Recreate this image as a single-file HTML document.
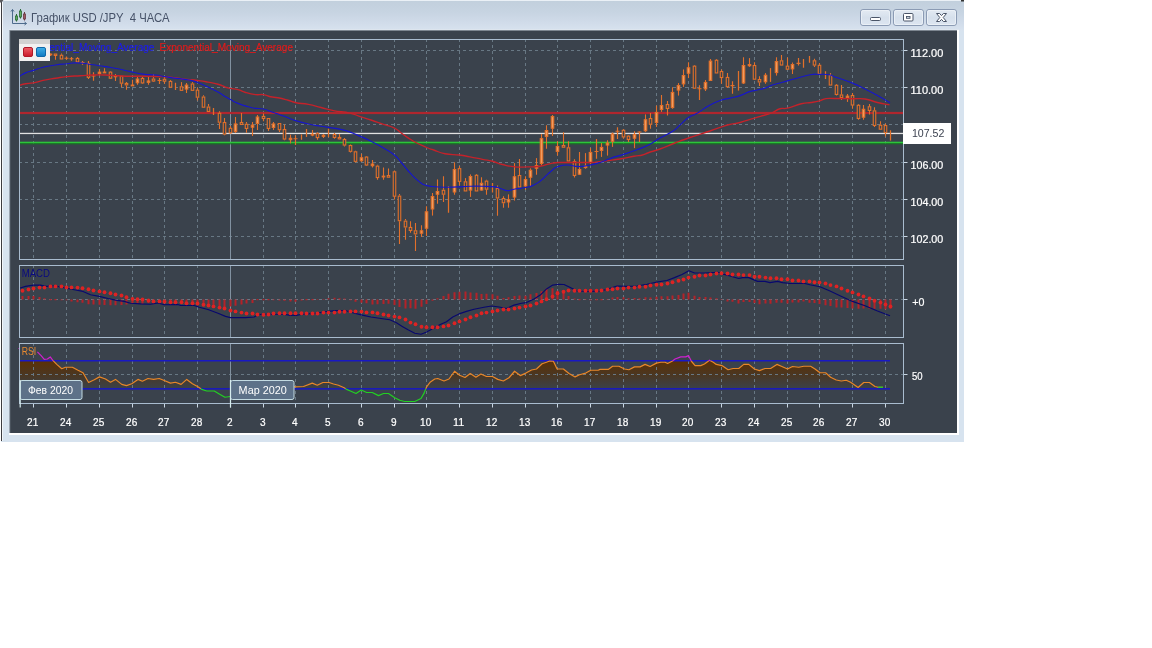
<!DOCTYPE html>
<html lang="ru"><head><meta charset="utf-8"><title>График USD /JPY 4 ЧАСА</title>
<style>html,body{margin:0;padding:0;background:#fff;}body{width:1152px;height:648px;overflow:hidden;}svg{display:block;}text{font-family:"Liberation Sans",sans-serif;}svg{will-change:transform;}</style></head><body>
<svg width="1152" height="648" viewBox="0 0 1152 648">
<defs>
<linearGradient id="tb" x1="0" y1="0" x2="0" y2="1"><stop offset="0" stop-color="#c1cfdc"/><stop offset="0.4" stop-color="#c7d4e2"/><stop offset="0.75" stop-color="#d1dcea"/><stop offset="1" stop-color="#d8e3ef"/></linearGradient>
<linearGradient id="btn" x1="0" y1="0" x2="0" y2="1"><stop offset="0" stop-color="#e4ebf3"/><stop offset="0.5" stop-color="#d6e0ec"/><stop offset="1" stop-color="#dde6f1"/></linearGradient>
<linearGradient id="rsif" gradientUnits="userSpaceOnUse" x1="0" y1="360" x2="0" y2="390"><stop offset="0" stop-color="#5e3002" stop-opacity="1"/><stop offset="0.5" stop-color="#553008" stop-opacity="0.62"/><stop offset="1" stop-color="#4a3418" stop-opacity="0.03"/></linearGradient>
<linearGradient id="rb" x1="0" y1="0" x2="0" y2="1"><stop offset="0" stop-color="#f06068"/><stop offset="1" stop-color="#c81828"/></linearGradient>
<linearGradient id="bb" x1="0" y1="0" x2="0" y2="1"><stop offset="0" stop-color="#40b0e8"/><stop offset="1" stop-color="#1078c0"/></linearGradient>
<clipPath id="cm"><rect x="20" y="40" width="883" height="219"/></clipPath>
<clipPath id="cr"><rect x="20" y="361" width="883" height="28"/></clipPath>
</defs>
<rect x="0" y="0" width="1152" height="648" fill="#ffffff"/>
<rect x="0" y="0" width="964" height="442" fill="#d7e3ef"/>
<rect x="0" y="0" width="964" height="31" fill="url(#tb)"/>
<rect x="0" y="0" width="964" height="1" fill="#eaf0f6"/>
<rect x="0" y="0" width="1" height="442" fill="#ffffff"/>
<rect x="1" y="1" width="1" height="440" fill="#3c3c40"/>
<rect x="2" y="2" width="1" height="439" fill="#f2f6fa"/>
<path d="M0,0 L3.5,0 L1.5,2.5 L0,2.5 Z" fill="#5a5a5e"/>
<rect x="961" y="0" width="3" height="1.5" fill="#333"/>
<rect x="9" y="29" width="950" height="406" fill="#ffffff"/>
<rect x="9" y="29" width="948" height="404" fill="#3a424c"/>
<rect x="9" y="29" width="950" height="1" fill="#dde5ee"/>
<rect x="9" y="30" width="948" height="1" fill="#7d8690"/>
<rect x="9" y="30" width="1" height="403" fill="#9aa4b0"/>
<rect x="10" y="31" width="1" height="402" fill="#4a535d"/>
<g stroke="#4d6b8c" stroke-width="1" fill="none"><path d="M12.5,9.5 V23.5 H26.5"/><path d="M11,11.5 L12.5,9.5 L14,11.5"/><path d="M24.5,22 L26.5,23.5 L24.5,25"/></g>
<g stroke-width="1"><path d="M16.5,14 V21.5" stroke="#2e6a3a"/><rect x="15.5" y="16" width="2" height="4" fill="#5fae5f" stroke="#2a6a34" stroke-width="0.8"/><path d="M20.5,9 V18.5" stroke="#2e6a3a"/><rect x="19.5" y="11" width="2" height="6" fill="#5fae5f" stroke="#2a6a34" stroke-width="0.8"/><path d="M24.5,12 V20.5" stroke="#6a3a44"/><rect x="23.5" y="14" width="2" height="5" fill="#a05a64" stroke="#6a3a44" stroke-width="0.8"/></g>
<text x="31" y="21.7" font-size="12.2" fill="#465268" textLength="138.5" lengthAdjust="spacingAndGlyphs">График USD /JPY&#160;&#160;4 ЧАСА</text>
<rect x="860.5" y="9.5" width="30" height="16" rx="2.5" fill="url(#btn)" stroke="#8b9bb4" stroke-width="1"/>
<rect x="861.5" y="10.5" width="28" height="14" rx="1.8" fill="none" stroke="#eef3f8" stroke-width="1" opacity="0.8"/>
<rect x="893.5" y="9.5" width="30" height="16" rx="2.5" fill="url(#btn)" stroke="#8b9bb4" stroke-width="1"/>
<rect x="894.5" y="10.5" width="28" height="14" rx="1.8" fill="none" stroke="#eef3f8" stroke-width="1" opacity="0.8"/>
<rect x="926.5" y="9.5" width="30" height="16" rx="2.5" fill="url(#btn)" stroke="#8b9bb4" stroke-width="1"/>
<rect x="927.5" y="10.5" width="28" height="14" rx="1.8" fill="none" stroke="#eef3f8" stroke-width="1" opacity="0.8"/>
<rect x="870.5" y="17.5" width="10" height="3" rx="1" fill="#ffffff" stroke="#4a5568" stroke-width="1"/>
<rect x="903.5" y="13.5" width="9.5" height="7.5" rx="1" fill="#ffffff" stroke="#4a5568" stroke-width="1"/>
<rect x="906.5" y="16.5" width="3.5" height="1.8" fill="#d6e0ec" stroke="#4a5568" stroke-width="0.9"/>
<path d="M936.5,13.5 H939.6 L941.5,15.6 L943.4,13.5 H946.5 L943.2,17.5 L946.5,21.5 H943.4 L941.5,19.4 L939.6,21.5 H936.5 L939.8,17.5 Z" fill="#ffffff" stroke="#4a5568" stroke-width="1" stroke-linejoin="round"/>
<g clip-path="url(#cr)"><path d="M19.5,388.8 L19.5,348.5 L30,349 L37.4,351.9 L41.1,355.6 L44.25,359.4 L47.4,359 L50.25,356.9 L53,360.6 L56.75,364.4 L61.75,368.75 L65.5,367.25 L72.4,367.25 L78,370.25 L83,372.75 L88.6,382.5 L94.25,379.75 L99.5,376.9 L105.5,379 L110.5,382.25 L115.5,379.4 L121.75,384.4 L126.5,385.6 L131.75,383.75 L138,379.4 L142.4,381.25 L148,378.5 L153.6,379.4 L159.25,378.5 L163,380 L170.5,383.1 L175.5,382.25 L181.1,384.4 L186.75,379.4 L192.4,383.75 L197.5,386.5 L201.75,389.4 L206.75,391 L214.25,391 L219.25,394 L224.9,397.25 L230.5,396.5 L236,396.5 L242,393 L250,390.5 L260,389 L270,388 L280,387.3 L294.25,386.9 L303.5,386.5 L312.25,383.1 L317.25,385.25 L322.9,382.5 L329.1,382.5 L333.5,384 L338.5,385.25 L344.1,387.75 L346.6,389.4 L351,391.25 L356,393.5 L361.25,390 L366.6,392.5 L372.25,392.5 L378.5,395.6 L383.5,393.5 L388.5,393.5 L394.75,397.75 L399.75,400.25 L404.75,401.5 L414.75,401.5 L421,398.5 L424.1,393.1 L426.6,386.9 L430.4,381.9 L434.75,379 L437.75,378.5 L444,381 L449,379 L454.6,371.25 L459.6,375.25 L465,377.5 L470.25,373.5 L475.9,377.25 L480.9,374 L486.5,376.5 L492.5,376.5 L497.75,379.4 L503.4,381 L509,377.75 L514.6,371.25 L520.25,375.6 L525.9,373.1 L531.5,370 L536.5,369 L542.1,363.75 L546.5,362.25 L549.6,361 L553.4,361.25 L557.1,369 L563.4,369 L569,373.5 L575.1,376.9 L579.5,374.75 L585.75,373.1 L590.75,370.25 L598.25,370.25 L600,369.4 L608.25,369.4 L612.6,366.25 L618.9,366.25 L624.5,369 L628.9,369.75 L634.5,366.9 L640.1,366.9 L645.1,364.4 L650.1,366.5 L656.4,363.1 L660.75,362.25 L665.1,362.25 L667.6,363.5 L672,361.25 L675.1,359 L680.75,356.9 L685.75,356.9 L688.5,355.6 L691.4,361.25 L695.1,365.6 L700.75,365.6 L704.5,364 L709.5,360.2 L713.25,362.25 L716.25,364.4 L721.9,365.6 L728.1,369.75 L733.1,368.5 L738.75,368.5 L743.75,364.4 L748.75,364.4 L754.4,369 L759.4,370.6 L765,368.5 L770.6,368.5 L776.9,364.4 L781.9,366.5 L787.5,369 L792.5,366.5 L798.75,367.25 L803.75,366.25 L810.6,366.25 L815,369 L820,372.75 L825.6,372.75 L830.6,377.25 L836.25,380 L841.25,381 L846.25,380.25 L850.6,382.25 L858.1,387.5 L863.75,382.5 L869.4,382.5 L875,386.5 L878.1,387.25 L883,387.25 L883,388.8 Z" fill="url(#rsif)"/></g>
<g stroke="#687884" stroke-width="1" stroke-dasharray="3,3" fill="none" >
<path d="M33.5,39 V259"/>
<path d="M66.5,39 V259"/>
<path d="M99.5,39 V259"/>
<path d="M132.5,39 V259"/>
<path d="M164.5,39 V259"/>
<path d="M197.5,39 V259"/>
<path d="M263.5,39 V259"/>
<path d="M295.5,39 V259"/>
<path d="M328.5,39 V259"/>
<path d="M361.5,39 V259"/>
<path d="M394.5,39 V259"/>
<path d="M426.5,39 V259"/>
<path d="M459.5,39 V259"/>
<path d="M492.5,39 V259"/>
<path d="M525.5,39 V259"/>
<path d="M557.5,39 V259"/>
<path d="M590.5,39 V259"/>
<path d="M623.5,39 V259"/>
<path d="M656.5,39 V259"/>
<path d="M688.5,39 V259"/>
<path d="M721.5,39 V259"/>
<path d="M754.5,39 V259"/>
<path d="M787.5,39 V259"/>
<path d="M819.5,39 V259"/>
<path d="M852.5,39 V259"/>
<path d="M885.5,39 V259"/>
<path d="M33.5,265 V337"/>
<path d="M66.5,265 V337"/>
<path d="M99.5,265 V337"/>
<path d="M132.5,265 V337"/>
<path d="M164.5,265 V337"/>
<path d="M197.5,265 V337"/>
<path d="M263.5,265 V337"/>
<path d="M295.5,265 V337"/>
<path d="M328.5,265 V337"/>
<path d="M361.5,265 V337"/>
<path d="M394.5,265 V337"/>
<path d="M426.5,265 V337"/>
<path d="M459.5,265 V337"/>
<path d="M492.5,265 V337"/>
<path d="M525.5,265 V337"/>
<path d="M557.5,265 V337"/>
<path d="M590.5,265 V337"/>
<path d="M623.5,265 V337"/>
<path d="M656.5,265 V337"/>
<path d="M688.5,265 V337"/>
<path d="M721.5,265 V337"/>
<path d="M754.5,265 V337"/>
<path d="M787.5,265 V337"/>
<path d="M819.5,265 V337"/>
<path d="M852.5,265 V337"/>
<path d="M885.5,265 V337"/>
<path d="M33.5,343 V403"/>
<path d="M66.5,343 V403"/>
<path d="M99.5,343 V403"/>
<path d="M132.5,343 V403"/>
<path d="M164.5,343 V403"/>
<path d="M197.5,343 V403"/>
<path d="M263.5,343 V403"/>
<path d="M295.5,343 V403"/>
<path d="M328.5,343 V403"/>
<path d="M361.5,343 V403"/>
<path d="M394.5,343 V403"/>
<path d="M426.5,343 V403"/>
<path d="M459.5,343 V403"/>
<path d="M492.5,343 V403"/>
<path d="M525.5,343 V403"/>
<path d="M557.5,343 V403"/>
<path d="M590.5,343 V403"/>
<path d="M623.5,343 V403"/>
<path d="M656.5,343 V403"/>
<path d="M688.5,343 V403"/>
<path d="M721.5,343 V403"/>
<path d="M754.5,343 V403"/>
<path d="M787.5,343 V403"/>
<path d="M819.5,343 V403"/>
<path d="M852.5,343 V403"/>
<path d="M885.5,343 V403"/>
<path d="M19,50.5 H903"/>
<path d="M19,87.5 H903"/>
<path d="M19,124.5 H903"/>
<path d="M19,162.5 H903"/>
<path d="M19,199.5 H903"/>
<path d="M19,236.5 H903"/>
<path d="M19,299.5 H903"/>
<path d="M19,374.5 H903"/>
</g>
<path d="M230.5,39.5 V259.5" stroke="#8191a0" stroke-width="1"/>
<path d="M230.5,265.5 V337.5" stroke="#8191a0" stroke-width="1"/>
<path d="M230.5,343.5 V403.5" stroke="#8191a0" stroke-width="1"/>
<g clip-path="url(#cm)">
<text x="20.5" y="51.3" font-size="11" fill="#1c1cea" stroke="#1c1cea" stroke-width="0.2" textLength="134" lengthAdjust="spacingAndGlyphs">Exponential_Moving_Average</text>
<text x="159.5" y="51.3" font-size="11" fill="#e21a1a" stroke="#e21a1a" stroke-width="0.2" textLength="133.5" lengthAdjust="spacingAndGlyphs">Exponential_Moving_Average</text>
<rect x="20" y="111.9" width="883" height="2.2" fill="#b0262e"/>
<rect x="20" y="132.8" width="883" height="1.3" fill="#e2e2e2"/>
<rect x="20" y="141.7" width="883" height="1.7" fill="#2cc43a"/>
<rect x="20" y="143.4" width="883" height="0.9" fill="#0e7e16"/>
<path d="M50.5,53.5 V56" stroke="#e2702a" stroke-width="1.1"/>
<rect x="49.25" y="54.05" width="2.5" height="0.8" fill="#f39c5e" stroke="#e2702a" stroke-width="1.1"/>
<path d="M55.5,56 V59.75" stroke="#e2702a" stroke-width="1.1"/>
<rect x="54.25" y="54.05" width="2.5" height="1.4" fill="#3a424c" stroke="#e2702a" stroke-width="1.1"/>
<path d="M61.5,53.5 V54.75 " stroke="#e2702a" stroke-width="1.1"/>
<rect x="60.25" y="55.3" width="2.5" height="3.65" fill="#3a424c" stroke="#e2702a" stroke-width="1.1"/>
<path d="M66.5,56.6 V59.75 M64.5,58.25 H68.5" stroke="#e2702a" stroke-width="1.2" fill="none"/>
<path d="M71.5,57 V60.75 M69.5,58.75 H73.5" stroke="#e2702a" stroke-width="1.2" fill="none"/>
<path d="M77.5,57 V57.9 " stroke="#e2702a" stroke-width="1.1"/>
<rect x="76.25" y="58.45" width="2.5" height="3.5" fill="#3a424c" stroke="#e2702a" stroke-width="1.1"/>
<path d="M82.5,61 V64.75 M80.5,62.5 H84.5" stroke="#e2702a" stroke-width="1.2" fill="none"/>
<path d="M88.5,61 V62.9 M88.5,77.9 V79" stroke="#e2702a" stroke-width="1.1"/>
<rect x="87.25" y="63.45" width="2.5" height="13.9" fill="#3a424c" stroke="#e2702a" stroke-width="1.1"/>
<path d="M93.5,72.25 V80.75 M91.5,76 H95.5" stroke="#e2702a" stroke-width="1.2" fill="none"/>
<path d="M99.5,69 V75.75" stroke="#e2702a" stroke-width="1.1"/>
<rect x="98.25" y="72.15" width="2.5" height="1.4" fill="#f39c5e" stroke="#e2702a" stroke-width="1.1"/>
<path d="M104.5,68.25 V72.9" stroke="#e2702a" stroke-width="1.1"/>
<rect x="103.25" y="72.05" width="2.5" height="0.8" fill="#f39c5e" stroke="#e2702a" stroke-width="1.1"/>
<path d="M110.5,71 V71.6 M110.5,78.75 V79.1" stroke="#e2702a" stroke-width="1.1"/>
<rect x="109.25" y="72.15" width="2.5" height="6.05" fill="#3a424c" stroke="#e2702a" stroke-width="1.1"/>
<path d="M115.5,74.1 V81" stroke="#e2702a" stroke-width="1.1"/>
<rect x="114.25" y="75.95" width="2.5" height="0.8" fill="#f39c5e" stroke="#e2702a" stroke-width="1.1"/>
<path d="M121.5,83.75 V87.25" stroke="#e2702a" stroke-width="1.1"/>
<rect x="120.25" y="76.3" width="2.5" height="6.9" fill="#3a424c" stroke="#e2702a" stroke-width="1.1"/>
<path d="M126.5,82 V82.9 M126.5,85.4 V89.75" stroke="#e2702a" stroke-width="1.1"/>
<rect x="125.25" y="83.45" width="2.5" height="1.4" fill="#3a424c" stroke="#e2702a" stroke-width="1.1"/>
<path d="M132.5,79.75 V85.75" stroke="#e2702a" stroke-width="1.1"/>
<rect x="131.25" y="85.05" width="2.5" height="0.8" fill="#f39c5e" stroke="#e2702a" stroke-width="1.1"/>
<path d="M137.5,76.6 V84.75" stroke="#e2702a" stroke-width="1.1"/>
<rect x="136.25" y="79.05" width="2.5" height="3.65" fill="#f39c5e" stroke="#e2702a" stroke-width="1.1"/>
<path d="M142.5,77 V77.9 M142.5,83.5 V84.1" stroke="#e2702a" stroke-width="1.1"/>
<rect x="141.25" y="78.45" width="2.5" height="4.5" fill="#3a424c" stroke="#e2702a" stroke-width="1.1"/>
<path d="M148.5,76 V84.75" stroke="#e2702a" stroke-width="1.1"/>
<rect x="147.25" y="80.95" width="2.5" height="1.4" fill="#f39c5e" stroke="#e2702a" stroke-width="1.1"/>
<path d="M153.5,74.1 V78.5 M153.5,81.6 V82" stroke="#e2702a" stroke-width="1.1"/>
<rect x="152.25" y="79.05" width="2.5" height="2" fill="#3a424c" stroke="#e2702a" stroke-width="1.1"/>
<path d="M159.5,77.9 V84.1 M157.5,80.5 H161.5" stroke="#e2702a" stroke-width="1.2" fill="none"/>
<path d="M164.5,77.1 V78.75 M164.5,81.75 V83.75" stroke="#e2702a" stroke-width="1.1"/>
<rect x="163.25" y="79.3" width="2.5" height="1.9" fill="#3a424c" stroke="#e2702a" stroke-width="1.1"/>
<path d="M170.5,80 V80.9 " stroke="#e2702a" stroke-width="1.1"/>
<rect x="169.25" y="81.45" width="2.5" height="5.75" fill="#3a424c" stroke="#e2702a" stroke-width="1.1"/>
<path d="M175.5,82.75 V90" stroke="#e2702a" stroke-width="1.25"/>
<path d="M181.5,82.1 V86.25 " stroke="#e2702a" stroke-width="1.1"/>
<rect x="180.25" y="86.8" width="2.5" height="3.55" fill="#3a424c" stroke="#e2702a" stroke-width="1.1"/>
<path d="M186.5,83 V93" stroke="#e2702a" stroke-width="1.1"/>
<rect x="185.25" y="85.15" width="2.5" height="3.9" fill="#f39c5e" stroke="#e2702a" stroke-width="1.1"/>
<path d="M192.5,82.1 V83.4 " stroke="#e2702a" stroke-width="1.1"/>
<rect x="191.25" y="83.95" width="2.5" height="6.4" fill="#3a424c" stroke="#e2702a" stroke-width="1.1"/>
<path d="M197.5,87.75 V89.6 M197.5,97.75 V100.5" stroke="#e2702a" stroke-width="1.1"/>
<rect x="196.25" y="90.15" width="2.5" height="7.05" fill="#3a424c" stroke="#e2702a" stroke-width="1.1"/>
<path d="M203.5,95.25 V96.5 " stroke="#e2702a" stroke-width="1.1"/>
<rect x="202.25" y="97.05" width="2.5" height="10.15" fill="#3a424c" stroke="#e2702a" stroke-width="1.1"/>
<path d="M208.5,104 V106.5 " stroke="#e2702a" stroke-width="1.1"/>
<rect x="207.25" y="107.05" width="2.5" height="4.4" fill="#3a424c" stroke="#e2702a" stroke-width="1.1"/>
<path d="M213.5,108 V115" stroke="#e2702a" stroke-width="1.25"/>
<path d="M219.5,111.25 V112.75 M219.5,122.75 V129" stroke="#e2702a" stroke-width="1.1"/>
<rect x="218.25" y="113.3" width="2.5" height="8.9" fill="#3a424c" stroke="#e2702a" stroke-width="1.1"/>
<path d="M224.5,118 V122 M224.5,134.6 V135.25" stroke="#e2702a" stroke-width="1.1"/>
<rect x="223.25" y="122.55" width="2.5" height="11.5" fill="#3a424c" stroke="#e2702a" stroke-width="1.1"/>
<path d="M230.5,125.9 V127.75 M230.5,133.4 V134" stroke="#e2702a" stroke-width="1.1"/>
<rect x="229.25" y="128.3" width="2.5" height="4.55" fill="#3a424c" stroke="#e2702a" stroke-width="1.1"/>
<path d="M235.5,117 V133" stroke="#e2702a" stroke-width="1.1"/>
<rect x="234.25" y="123.95" width="2.5" height="7.5" fill="#f39c5e" stroke="#e2702a" stroke-width="1.1"/>
<path d="M241.5,113 V122 " stroke="#e2702a" stroke-width="1.1"/>
<rect x="240.25" y="122.55" width="2.5" height="1.9" fill="#3a424c" stroke="#e2702a" stroke-width="1.1"/>
<path d="M246.5,122 V123.75 M246.5,129 V132.75" stroke="#e2702a" stroke-width="1.1"/>
<rect x="245.25" y="124.3" width="2.5" height="4.15" fill="#3a424c" stroke="#e2702a" stroke-width="1.1"/>
<path d="M252.5,122 V136" stroke="#e2702a" stroke-width="1.1"/>
<rect x="251.25" y="125.15" width="2.5" height="2.05" fill="#f39c5e" stroke="#e2702a" stroke-width="1.1"/>
<path d="M257.5,115 V130" stroke="#e2702a" stroke-width="1.1"/>
<rect x="256.25" y="117.05" width="2.5" height="6.4" fill="#f39c5e" stroke="#e2702a" stroke-width="1.1"/>
<path d="M263.5,113.4 V115.9 M263.5,119 V121.25" stroke="#e2702a" stroke-width="1.1"/>
<rect x="262.25" y="116.45" width="2.5" height="2" fill="#3a424c" stroke="#e2702a" stroke-width="1.1"/>
<path d="M268.5,129 V130.9" stroke="#e2702a" stroke-width="1.1"/>
<rect x="267.25" y="118.55" width="2.5" height="9.9" fill="#3a424c" stroke="#e2702a" stroke-width="1.1"/>
<path d="M273.5,122 V130" stroke="#e2702a" stroke-width="1.1"/>
<rect x="272.25" y="123.95" width="2.5" height="3.5" fill="#f39c5e" stroke="#e2702a" stroke-width="1.1"/>
<path d="M279.5,130.25 V132" stroke="#e2702a" stroke-width="1.1"/>
<rect x="278.25" y="123.55" width="2.5" height="6.15" fill="#3a424c" stroke="#e2702a" stroke-width="1.1"/>
<path d="M284.5,124.6 V129 M284.5,139.6 V140.25" stroke="#e2702a" stroke-width="1.1"/>
<rect x="283.25" y="129.55" width="2.5" height="9.5" fill="#3a424c" stroke="#e2702a" stroke-width="1.1"/>
<path d="M290.5,134.6 V143.4" stroke="#e2702a" stroke-width="1.1"/>
<rect x="289.25" y="138.3" width="2.5" height="1.4" fill="#f39c5e" stroke="#e2702a" stroke-width="1.1"/>
<path d="M295.5,135.25 V145 M293.5,138.75 H297.5" stroke="#e2702a" stroke-width="1.2" fill="none"/>
<path d="M301.5,134.4 V139.75" stroke="#e2702a" stroke-width="1.25"/>
<path d="M306.5,129 V136.9" stroke="#e2702a" stroke-width="1.25"/>
<path d="M312.5,130 V136.25" stroke="#e2702a" stroke-width="1.1"/>
<rect x="311.25" y="134.3" width="2.5" height="0.8" fill="#f39c5e" stroke="#e2702a" stroke-width="1.1"/>
<path d="M317.5,132.25 V133.1 M317.5,138.1 V139.75" stroke="#e2702a" stroke-width="1.1"/>
<rect x="316.25" y="133.65" width="2.5" height="3.9" fill="#3a424c" stroke="#e2702a" stroke-width="1.1"/>
<path d="M323.5,134 V138" stroke="#e2702a" stroke-width="1.1"/>
<rect x="322.25" y="135.3" width="2.5" height="1.05" fill="#f39c5e" stroke="#e2702a" stroke-width="1.1"/>
<path d="M328.5,128.75 V137.25" stroke="#e2702a" stroke-width="1.25"/>
<path d="M334.5,133 V134 M334.5,138 V138.75" stroke="#e2702a" stroke-width="1.1"/>
<rect x="333.25" y="134.55" width="2.5" height="2.9" fill="#3a424c" stroke="#e2702a" stroke-width="1.1"/>
<path d="M339.5,134 V136.9 M339.5,139.4 V139.75" stroke="#e2702a" stroke-width="1.1"/>
<rect x="338.25" y="137.45" width="2.5" height="1.4" fill="#3a424c" stroke="#e2702a" stroke-width="1.1"/>
<path d="M344.5,138 V139 M344.5,145.6 V146.5" stroke="#e2702a" stroke-width="1.1"/>
<rect x="343.25" y="139.55" width="2.5" height="5.5" fill="#3a424c" stroke="#e2702a" stroke-width="1.1"/>
<path d="M350.5,144.5 V145 M350.5,151.9 V152.4" stroke="#e2702a" stroke-width="1.1"/>
<rect x="349.25" y="145.55" width="2.5" height="5.8" fill="#3a424c" stroke="#e2702a" stroke-width="1.1"/>
<path d="M355.5,150.75 V151.25 M355.5,161.9 V162.4" stroke="#e2702a" stroke-width="1.1"/>
<rect x="354.25" y="151.8" width="2.5" height="9.55" fill="#3a424c" stroke="#e2702a" stroke-width="1.1"/>
<path d="M361.5,153.75 V161.9" stroke="#e2702a" stroke-width="1.1"/>
<rect x="360.25" y="157.8" width="2.5" height="2.9" fill="#f39c5e" stroke="#e2702a" stroke-width="1.1"/>
<path d="M366.5,156 V156.5 M366.5,165.6 V166" stroke="#e2702a" stroke-width="1.1"/>
<rect x="365.25" y="157.05" width="2.5" height="8" fill="#3a424c" stroke="#e2702a" stroke-width="1.1"/>
<path d="M372.5,160 V167.5" stroke="#e2702a" stroke-width="1.1"/>
<rect x="371.25" y="164.05" width="2.5" height="1.65" fill="#f39c5e" stroke="#e2702a" stroke-width="1.1"/>
<path d="M377.5,164.75 V165.6 M377.5,178.1 V179.75" stroke="#e2702a" stroke-width="1.1"/>
<rect x="376.25" y="166.15" width="2.5" height="11.4" fill="#3a424c" stroke="#e2702a" stroke-width="1.1"/>
<path d="M383.5,167.5 V179.75" stroke="#e2702a" stroke-width="1.1"/>
<rect x="382.25" y="176.15" width="2.5" height="0.8" fill="#f39c5e" stroke="#e2702a" stroke-width="1.1"/>
<path d="M388.5,168.5 V175 " stroke="#e2702a" stroke-width="1.1"/>
<rect x="387.25" y="175.55" width="2.5" height="1.65" fill="#3a424c" stroke="#e2702a" stroke-width="1.1"/>
<path d="M394.5,170.6 V171.25 M394.5,196.75 V199.4" stroke="#e2702a" stroke-width="1.1"/>
<rect x="393.25" y="171.8" width="2.5" height="24.4" fill="#3a424c" stroke="#e2702a" stroke-width="1.1"/>
<path d="M399.5,194 V195.6 M399.5,221.25 V244" stroke="#e2702a" stroke-width="1.1"/>
<rect x="398.25" y="196.15" width="2.5" height="24.55" fill="#3a424c" stroke="#e2702a" stroke-width="1.1"/>
<path d="M405.5,219 V220.6 M405.5,227.5 V239.75" stroke="#e2702a" stroke-width="1.1"/>
<rect x="404.25" y="221.15" width="2.5" height="5.8" fill="#3a424c" stroke="#e2702a" stroke-width="1.1"/>
<path d="M410.5,221.25 V226.9 M410.5,231 V232.75" stroke="#e2702a" stroke-width="1.1"/>
<rect x="409.25" y="227.45" width="2.5" height="3" fill="#3a424c" stroke="#e2702a" stroke-width="1.1"/>
<path d="M415.5,223 V230.25 M415.5,234.4 V251" stroke="#e2702a" stroke-width="1.1"/>
<rect x="414.25" y="230.8" width="2.5" height="3.05" fill="#3a424c" stroke="#e2702a" stroke-width="1.1"/>
<path d="M421.5,225.25 V236.9" stroke="#e2702a" stroke-width="1.1"/>
<rect x="420.25" y="230.8" width="2.5" height="2.4" fill="#f39c5e" stroke="#e2702a" stroke-width="1.1"/>
<path d="M426.5,206.25 V236" stroke="#e2702a" stroke-width="1.1"/>
<rect x="425.25" y="211.8" width="2.5" height="16.4" fill="#f39c5e" stroke="#e2702a" stroke-width="1.1"/>
<path d="M432.5,193 V215.6" stroke="#e2702a" stroke-width="1.1"/>
<rect x="431.25" y="196.55" width="2.5" height="12.4" fill="#f39c5e" stroke="#e2702a" stroke-width="1.1"/>
<path d="M437.5,179.4 V203.75" stroke="#e2702a" stroke-width="1.1"/>
<rect x="436.25" y="191.55" width="2.5" height="2.65" fill="#f39c5e" stroke="#e2702a" stroke-width="1.1"/>
<path d="M443.5,176.25 V189.75 M443.5,194.75 V201.9" stroke="#e2702a" stroke-width="1.1"/>
<rect x="442.25" y="190.3" width="2.5" height="3.9" fill="#3a424c" stroke="#e2702a" stroke-width="1.1"/>
<path d="M448.5,186.25 V212.75" stroke="#e2702a" stroke-width="1.25"/>
<path d="M454.5,162.25 V194.75" stroke="#e2702a" stroke-width="1.1"/>
<rect x="453.25" y="169.55" width="2.5" height="22.4" fill="#f39c5e" stroke="#e2702a" stroke-width="1.1"/>
<path d="M459.5,166 V168.1 M459.5,181.9 V185.25" stroke="#e2702a" stroke-width="1.1"/>
<rect x="458.25" y="168.65" width="2.5" height="12.7" fill="#3a424c" stroke="#e2702a" stroke-width="1.1"/>
<path d="M465.5,178.1 V181.25 " stroke="#e2702a" stroke-width="1.1"/>
<rect x="464.25" y="181.8" width="2.5" height="9.15" fill="#3a424c" stroke="#e2702a" stroke-width="1.1"/>
<path d="M470.5,174.4 V196.9" stroke="#e2702a" stroke-width="1.1"/>
<rect x="469.25" y="176.55" width="2.5" height="13.5" fill="#f39c5e" stroke="#e2702a" stroke-width="1.1"/>
<path d="M476.5,174 V174.75 " stroke="#e2702a" stroke-width="1.1"/>
<rect x="475.25" y="175.3" width="2.5" height="15.65" fill="#3a424c" stroke="#e2702a" stroke-width="1.1"/>
<path d="M481.5,177.25 V190.6" stroke="#e2702a" stroke-width="1.1"/>
<rect x="480.25" y="183.3" width="2.5" height="6.75" fill="#f39c5e" stroke="#e2702a" stroke-width="1.1"/>
<path d="M486.5,179.75 V180.6 M486.5,189.75 V194.75" stroke="#e2702a" stroke-width="1.1"/>
<rect x="485.25" y="181.15" width="2.5" height="8.05" fill="#3a424c" stroke="#e2702a" stroke-width="1.1"/>
<path d="M492.5,183 V192.5" stroke="#e2702a" stroke-width="1.25"/>
<path d="M497.5,185.6 V188 M497.5,198.5 V215.8" stroke="#e2702a" stroke-width="1.1"/>
<rect x="496.25" y="188.55" width="2.5" height="9.4" fill="#3a424c" stroke="#e2702a" stroke-width="1.1"/>
<path d="M503.5,196.25 V198 M503.5,203.25 V207.75" stroke="#e2702a" stroke-width="1.1"/>
<rect x="502.25" y="198.55" width="2.5" height="4.15" fill="#3a424c" stroke="#e2702a" stroke-width="1.1"/>
<path d="M508.5,194.4 V207.75" stroke="#e2702a" stroke-width="1.1"/>
<rect x="507.25" y="199.75" width="2.5" height="2.2" fill="#f39c5e" stroke="#e2702a" stroke-width="1.1"/>
<path d="M514.5,163.1 V200.6" stroke="#e2702a" stroke-width="1.1"/>
<rect x="513.25" y="176.8" width="2.5" height="20.25" fill="#f39c5e" stroke="#e2702a" stroke-width="1.1"/>
<path d="M519.5,159 V175 " stroke="#e2702a" stroke-width="1.1"/>
<rect x="518.25" y="175.55" width="2.5" height="11.4" fill="#3a424c" stroke="#e2702a" stroke-width="1.1"/>
<path d="M525.5,176.25 V189.75" stroke="#e2702a" stroke-width="1.1"/>
<rect x="524.25" y="179.55" width="2.5" height="6.4" fill="#f39c5e" stroke="#e2702a" stroke-width="1.1"/>
<path d="M530.5,168.3 V186" stroke="#e2702a" stroke-width="1.1"/>
<rect x="529.25" y="170.3" width="2.5" height="6.9" fill="#f39c5e" stroke="#e2702a" stroke-width="1.1"/>
<path d="M536.5,158.1 V174.75" stroke="#e2702a" stroke-width="1.1"/>
<rect x="535.25" y="165.65" width="2.5" height="2.55" fill="#f39c5e" stroke="#e2702a" stroke-width="1.1"/>
<path d="M541.5,134 V165.6" stroke="#e2702a" stroke-width="1.1"/>
<rect x="540.25" y="138.65" width="2.5" height="24.8" fill="#f39c5e" stroke="#e2702a" stroke-width="1.1"/>
<path d="M546.5,125.25 V148.75" stroke="#e2702a" stroke-width="1.1"/>
<rect x="545.25" y="130.55" width="2.5" height="5.8" fill="#f39c5e" stroke="#e2702a" stroke-width="1.1"/>
<path d="M552.5,115 V136" stroke="#e2702a" stroke-width="1.1"/>
<rect x="551.25" y="116.55" width="2.5" height="11.65" fill="#f39c5e" stroke="#e2702a" stroke-width="1.1"/>
<path d="M557.5,141.25 V155.6" stroke="#e2702a" stroke-width="1.1"/>
<rect x="556.25" y="146.55" width="2.5" height="4.8" fill="#f39c5e" stroke="#e2702a" stroke-width="1.1"/>
<path d="M563.5,132.25 V145 " stroke="#e2702a" stroke-width="1.1"/>
<rect x="562.25" y="145.55" width="2.5" height="1.65" fill="#3a424c" stroke="#e2702a" stroke-width="1.1"/>
<path d="M568.5,141.25 V147.25 " stroke="#e2702a" stroke-width="1.1"/>
<rect x="567.25" y="147.8" width="2.5" height="13.15" fill="#3a424c" stroke="#e2702a" stroke-width="1.1"/>
<path d="M574.5,159.2 V161.1 M574.5,176 V177.6" stroke="#e2702a" stroke-width="1.1"/>
<rect x="573.25" y="161.65" width="2.5" height="13.8" fill="#3a424c" stroke="#e2702a" stroke-width="1.1"/>
<path d="M579.5,152 V174.75" stroke="#e2702a" stroke-width="1.1"/>
<rect x="578.25" y="169.55" width="2.5" height="4.65" fill="#f39c5e" stroke="#e2702a" stroke-width="1.1"/>
<path d="M585.5,153.1 V168.75" stroke="#e2702a" stroke-width="1.1"/>
<rect x="584.25" y="166.15" width="2.5" height="1.4" fill="#f39c5e" stroke="#e2702a" stroke-width="1.1"/>
<path d="M590.5,148.1 V164.2" stroke="#e2702a" stroke-width="1.1"/>
<rect x="589.25" y="152.45" width="2.5" height="10.1" fill="#f39c5e" stroke="#e2702a" stroke-width="1.1"/>
<path d="M596.5,139 V158.75 M594.5,151.5 H598.5" stroke="#e2702a" stroke-width="1.2" fill="none"/>
<path d="M601.5,143.1 V156.9" stroke="#e2702a" stroke-width="1.1"/>
<rect x="600.25" y="147.45" width="2.5" height="3" fill="#f39c5e" stroke="#e2702a" stroke-width="1.1"/>
<path d="M607.5,140.25 V155.6" stroke="#e2702a" stroke-width="1.1"/>
<rect x="606.25" y="143.05" width="2.5" height="2" fill="#f39c5e" stroke="#e2702a" stroke-width="1.1"/>
<path d="M612.5,132.5 V146.9" stroke="#e2702a" stroke-width="1.1"/>
<rect x="611.25" y="134.05" width="2.5" height="7.3" fill="#f39c5e" stroke="#e2702a" stroke-width="1.1"/>
<path d="M617.5,127.25 V139 M615.5,131.25 H619.5" stroke="#e2702a" stroke-width="1.2" fill="none"/>
<path d="M623.5,129 V129.75 M623.5,137.5 V138.75" stroke="#e2702a" stroke-width="1.1"/>
<rect x="622.25" y="130.3" width="2.5" height="6.65" fill="#3a424c" stroke="#e2702a" stroke-width="1.1"/>
<path d="M628.5,135 V135.6 M628.5,140 V141.9" stroke="#e2702a" stroke-width="1.1"/>
<rect x="627.25" y="136.15" width="2.5" height="3.3" fill="#3a424c" stroke="#e2702a" stroke-width="1.1"/>
<path d="M634.5,131.25 V148.1" stroke="#e2702a" stroke-width="1.1"/>
<rect x="633.25" y="134.55" width="2.5" height="3.65" fill="#f39c5e" stroke="#e2702a" stroke-width="1.1"/>
<path d="M639.5,131.25 V141.9 M637.5,132 H641.5" stroke="#e2702a" stroke-width="1.2" fill="none"/>
<path d="M645.5,114.4 V131.9" stroke="#e2702a" stroke-width="1.1"/>
<rect x="644.25" y="119.75" width="2.5" height="10.95" fill="#f39c5e" stroke="#e2702a" stroke-width="1.1"/>
<path d="M650.5,113 V118 M650.5,124.75 V128.75" stroke="#e2702a" stroke-width="1.1"/>
<rect x="649.25" y="118.55" width="2.5" height="5.65" fill="#3a424c" stroke="#e2702a" stroke-width="1.1"/>
<path d="M656.5,105.6 V126.9" stroke="#e2702a" stroke-width="1.1"/>
<rect x="655.25" y="112.45" width="2.5" height="10" fill="#f39c5e" stroke="#e2702a" stroke-width="1.1"/>
<path d="M661.5,95 V111.9" stroke="#e2702a" stroke-width="1.1"/>
<rect x="660.25" y="105.55" width="2.5" height="3.9" fill="#f39c5e" stroke="#e2702a" stroke-width="1.1"/>
<path d="M667.5,101 V104 M667.5,109 V115.6" stroke="#e2702a" stroke-width="1.1"/>
<rect x="666.25" y="104.55" width="2.5" height="3.9" fill="#3a424c" stroke="#e2702a" stroke-width="1.1"/>
<path d="M672.5,87.25 V108.75" stroke="#e2702a" stroke-width="1.1"/>
<rect x="671.25" y="92.45" width="2.5" height="15.1" fill="#f39c5e" stroke="#e2702a" stroke-width="1.1"/>
<path d="M678.5,83.1 V95.6" stroke="#e2702a" stroke-width="1.1"/>
<rect x="677.25" y="85.55" width="2.5" height="4.5" fill="#f39c5e" stroke="#e2702a" stroke-width="1.1"/>
<path d="M683.5,69.4 V86.9" stroke="#e2702a" stroke-width="1.1"/>
<rect x="682.25" y="75.55" width="2.5" height="8.3" fill="#f39c5e" stroke="#e2702a" stroke-width="1.1"/>
<path d="M688.5,62.25 V78.1" stroke="#e2702a" stroke-width="1.1"/>
<rect x="687.25" y="67.8" width="2.5" height="5.4" fill="#f39c5e" stroke="#e2702a" stroke-width="1.1"/>
<path d="M694.5,65 V65.6 " stroke="#e2702a" stroke-width="1.1"/>
<rect x="693.25" y="66.15" width="2.5" height="22.05" fill="#3a424c" stroke="#e2702a" stroke-width="1.1"/>
<path d="M699.5,85.25 V100 M697.5,88.75 H701.5" stroke="#e2702a" stroke-width="1.2" fill="none"/>
<path d="M705.5,80 V91" stroke="#e2702a" stroke-width="1.1"/>
<rect x="704.25" y="82.45" width="2.5" height="6.4" fill="#f39c5e" stroke="#e2702a" stroke-width="1.1"/>
<path d="M710.5,59 V81" stroke="#e2702a" stroke-width="1.1"/>
<rect x="709.25" y="61.15" width="2.5" height="19.3" fill="#f39c5e" stroke="#e2702a" stroke-width="1.1"/>
<path d="M716.5,59 V59.75 " stroke="#e2702a" stroke-width="1.1"/>
<rect x="715.25" y="60.3" width="2.5" height="12.65" fill="#3a424c" stroke="#e2702a" stroke-width="1.1"/>
<path d="M721.5,69.4 V71 M721.5,78.1 V83.75" stroke="#e2702a" stroke-width="1.1"/>
<rect x="720.25" y="71.55" width="2.5" height="6" fill="#3a424c" stroke="#e2702a" stroke-width="1.1"/>
<path d="M727.5,73.1 V76.9 M727.5,87.25 V88.1" stroke="#e2702a" stroke-width="1.1"/>
<rect x="726.25" y="77.45" width="2.5" height="9.25" fill="#3a424c" stroke="#e2702a" stroke-width="1.1"/>
<path d="M732.5,81.25 V93.75 M730.5,85.6 H734.5" stroke="#e2702a" stroke-width="1.2" fill="none"/>
<path d="M738.5,71 V90.6" stroke="#e2702a" stroke-width="1.25"/>
<path d="M743.5,57.25 V84" stroke="#e2702a" stroke-width="1.1"/>
<rect x="742.25" y="65.55" width="2.5" height="17.4" fill="#f39c5e" stroke="#e2702a" stroke-width="1.1"/>
<path d="M749.5,58.1 V66.9" stroke="#e2702a" stroke-width="1.1"/>
<rect x="748.25" y="64.55" width="2.5" height="1.15" fill="#f39c5e" stroke="#e2702a" stroke-width="1.1"/>
<path d="M754.5,62.25 V65 " stroke="#e2702a" stroke-width="1.1"/>
<rect x="753.25" y="65.55" width="2.5" height="13.65" fill="#3a424c" stroke="#e2702a" stroke-width="1.1"/>
<path d="M759.5,76.25 V79 M759.5,82.5 V86" stroke="#e2702a" stroke-width="1.1"/>
<rect x="758.25" y="79.55" width="2.5" height="2.4" fill="#3a424c" stroke="#e2702a" stroke-width="1.1"/>
<path d="M765.5,73.1 V83.75" stroke="#e2702a" stroke-width="1.1"/>
<rect x="764.25" y="75.3" width="2.5" height="6.4" fill="#f39c5e" stroke="#e2702a" stroke-width="1.1"/>
<path d="M770.5,68.1 V81.9" stroke="#e2702a" stroke-width="1.25"/>
<path d="M776.5,57.25 V75.6" stroke="#e2702a" stroke-width="1.1"/>
<rect x="775.25" y="61.55" width="2.5" height="11" fill="#f39c5e" stroke="#e2702a" stroke-width="1.1"/>
<path d="M781.5,55 V60.25 " stroke="#e2702a" stroke-width="1.1"/>
<rect x="780.25" y="60.8" width="2.5" height="4.25" fill="#3a424c" stroke="#e2702a" stroke-width="1.1"/>
<path d="M787.5,57.5 V65.6 " stroke="#e2702a" stroke-width="1.1"/>
<rect x="786.25" y="66.15" width="2.5" height="3.05" fill="#3a424c" stroke="#e2702a" stroke-width="1.1"/>
<path d="M792.5,62.5 V74" stroke="#e2702a" stroke-width="1.1"/>
<rect x="791.25" y="64.55" width="2.5" height="4.3" fill="#f39c5e" stroke="#e2702a" stroke-width="1.1"/>
<path d="M798.5,58.1 V65.6 M796.5,63.4 H800.5" stroke="#e2702a" stroke-width="1.2" fill="none"/>
<path d="M803.5,59 V67.75" stroke="#e2702a" stroke-width="1.25"/>
<path d="M809.5,56 V62.75" stroke="#e2702a" stroke-width="1.25"/>
<path d="M814.5,58.75 V60.25 M814.5,65.6 V66.9" stroke="#e2702a" stroke-width="1.1"/>
<rect x="813.25" y="60.8" width="2.5" height="4.25" fill="#3a424c" stroke="#e2702a" stroke-width="1.1"/>
<path d="M819.5,63.1 V64.75 " stroke="#e2702a" stroke-width="1.1"/>
<rect x="818.25" y="65.3" width="2.5" height="8.55" fill="#3a424c" stroke="#e2702a" stroke-width="1.1"/>
<path d="M825.5,71.25 V79" stroke="#e2702a" stroke-width="1.25"/>
<path d="M830.5,73.1 V75 " stroke="#e2702a" stroke-width="1.1"/>
<rect x="829.25" y="75.55" width="2.5" height="9.5" fill="#3a424c" stroke="#e2702a" stroke-width="1.1"/>
<path d="M836.5,84 V84.75 M836.5,95 V95.6" stroke="#e2702a" stroke-width="1.1"/>
<rect x="835.25" y="85.3" width="2.5" height="9.15" fill="#3a424c" stroke="#e2702a" stroke-width="1.1"/>
<path d="M841.5,85 V94.4 M841.5,98.1 V100" stroke="#e2702a" stroke-width="1.1"/>
<rect x="840.25" y="94.95" width="2.5" height="2.6" fill="#3a424c" stroke="#e2702a" stroke-width="1.1"/>
<path d="M847.5,94 V101.9" stroke="#e2702a" stroke-width="1.1"/>
<rect x="846.25" y="96.15" width="2.5" height="1.4" fill="#f39c5e" stroke="#e2702a" stroke-width="1.1"/>
<path d="M852.5,93.1 V95 M852.5,105.6 V108.75" stroke="#e2702a" stroke-width="1.1"/>
<rect x="851.25" y="95.55" width="2.5" height="9.5" fill="#3a424c" stroke="#e2702a" stroke-width="1.1"/>
<path d="M858.5,104 V104.75 M858.5,119 V119.75" stroke="#e2702a" stroke-width="1.1"/>
<rect x="857.25" y="105.3" width="2.5" height="13.15" fill="#3a424c" stroke="#e2702a" stroke-width="1.1"/>
<path d="M863.5,105 V119.75" stroke="#e2702a" stroke-width="1.1"/>
<rect x="862.25" y="109.3" width="2.5" height="7.9" fill="#f39c5e" stroke="#e2702a" stroke-width="1.1"/>
<path d="M869.5,104 V106.2 M869.5,111 V114.5" stroke="#e2702a" stroke-width="1.1"/>
<rect x="868.25" y="106.75" width="2.5" height="3.7" fill="#3a424c" stroke="#e2702a" stroke-width="1.1"/>
<path d="M874.5,107.2 V110.3 M874.5,126 V126.9" stroke="#e2702a" stroke-width="1.1"/>
<rect x="873.25" y="110.85" width="2.5" height="14.6" fill="#3a424c" stroke="#e2702a" stroke-width="1.1"/>
<path d="M880.5,121.25 V124.75 " stroke="#e2702a" stroke-width="1.1"/>
<rect x="879.25" y="125.3" width="2.5" height="3.9" fill="#3a424c" stroke="#e2702a" stroke-width="1.1"/>
<path d="M885.5,123.5 V125 M885.5,133.1 V136.5" stroke="#e2702a" stroke-width="1.1"/>
<rect x="884.25" y="125.55" width="2.5" height="7" fill="#3a424c" stroke="#e2702a" stroke-width="1.1"/>
<path d="M890.5,130.25 V140.6" stroke="#e2702a" stroke-width="1.25"/>
<path d="M19.5,85.4 C21.1,84.96 21.74,84.42 25.5,83.75 C29.26,83.08 28.93,83.79 33.6,82.9 C38.27,82.01 37.16,81.64 43,80.4 C48.84,79.16 49.17,79.26 55.5,78.25 C61.83,77.24 60.08,77.27 66.75,76.6 C73.42,75.93 73.5,76.18 80.5,75.75 C87.5,75.32 86.33,75.2 93,75 C99.67,74.8 98.83,74.8 105.5,75 C112.17,75.2 111.33,75.42 118,75.75 C124.67,76.08 123.83,76.12 130.5,76.25 C137.17,76.38 135.67,76.18 143,76.25 C150.33,76.32 150.67,76.27 158,76.5 C165.33,76.73 163.83,76.43 170.5,77.1 C177.17,77.77 175.8,78.09 183,79 C190.2,79.91 190.83,79.67 197.5,80.5 C204.17,81.33 202.53,81.1 208,82.1 C213.47,83.1 213.33,82.92 218,84.25 C222.67,85.58 222.17,85.99 225.5,87.1 C228.83,88.21 227.17,87.73 230.5,88.4 C233.83,89.07 234,88.51 238,89.6 C242,90.69 240.83,91.17 245.5,92.5 C250.17,93.83 250.73,94.04 255.5,94.6 C260.27,95.16 259.4,94.03 263.4,94.6 C267.4,95.17 266.61,95.91 270.5,96.75 C274.39,97.59 273.33,96.82 278,97.75 C282.67,98.68 283.2,98.92 288,100.25 C292.8,101.58 290.53,101.64 296,102.75 C301.47,103.86 301.83,103.13 308.5,104.4 C315.17,105.67 314.33,105.85 321,107.5 C327.67,109.15 325.83,109.11 333.5,110.6 C341.17,112.09 342.42,111.42 349.75,113.1 C357.08,114.78 355.33,115.06 361,116.9 C366.67,118.74 365,118 371,120 C377,122 377.26,122.24 383.5,124.4 C389.74,126.56 389.4,125.61 394.4,128.1 C399.4,130.59 397.16,130.24 402.25,133.75 C407.34,137.26 407.01,137.58 413.5,141.25 C419.99,144.92 421.2,145.17 426.6,147.5 C432,149.83 428.84,148.33 433.75,150 C438.66,151.67 438.16,152.42 445,153.75 C451.84,155.08 452.73,154.16 459.4,155 C466.07,155.84 463.84,155.73 470,156.9 C476.16,158.07 476.5,158.24 482.5,159.4 C488.5,160.56 487.17,159.89 492.5,161.25 C497.83,162.61 496.5,162.99 502.5,164.5 C508.5,166.01 508.33,166.26 515,166.9 C521.67,167.54 520.83,167.07 527.5,166.9 C534.17,166.73 533.33,167.26 540,166.25 C546.67,165.24 545.83,164.1 552.5,163.1 C559.17,162.1 555,162.66 565,162.5 C575,162.34 581.33,162.66 590,162.5 C598.67,162.34 592.5,162.41 597.5,161.9 C602.5,161.39 602.42,161.44 608.75,160.6 C615.08,159.76 614.52,159.91 621.25,158.75 C627.98,157.59 628.33,157.25 634,156.25 C639.67,155.25 638.5,156 642.5,155 C646.5,154 644.33,154.1 649,152.5 C653.67,150.9 653.07,151.53 660,149 C666.93,146.47 667,146.07 675,143 C683,139.93 680.67,140.7 690,137.5 C699.33,134.3 700,134.33 710,131 C720,127.67 719.5,127.27 727.5,125 C735.5,122.73 732.83,124.34 740,122.5 C747.17,120.66 747.73,120.1 754.4,118.1 C761.07,116.1 760.17,116.49 765,115 C769.83,113.51 768.5,114.17 772.5,112.5 C776.5,110.83 776,109.92 780,108.75 C784,107.58 781.83,109.43 787.5,108.1 C793.17,106.77 794.92,105.24 801.25,103.75 C807.58,102.26 806.36,103.29 811.25,102.5 C816.14,101.71 815.67,101.84 819.6,100.8 C823.53,99.76 821.89,99.21 826,98.6 C830.11,97.99 827.93,98.46 835,98.5 C842.07,98.54 844.5,98.62 852.5,98.75 C860.5,98.88 858.33,98 865,99 C871.67,100 870.97,100.93 877.5,102.5 C884.03,104.07 886.3,104.26 889.5,104.9" fill="none" stroke="#c4222a" stroke-width="1.35" stroke-linejoin="round"/>
<path d="M19.5,76.25 C21.1,75.36 21.74,74.46 25.5,72.9 C29.26,71.34 28.93,71.91 33.6,70.4 C38.27,68.89 37.16,68.69 43,67.25 C48.84,65.81 49.17,65.93 55.5,65 C61.83,64.07 61.75,64.31 66.75,63.75 C71.75,63.19 69.92,63.03 74.25,62.9 C78.58,62.77 78,62.76 83,63.25 C88,63.74 87,63.86 93,64.75 C99,65.64 98.83,65.53 105.5,66.6 C112.17,67.67 111.33,67.42 118,68.75 C124.67,70.08 123.83,70.17 130.5,71.6 C137.17,73.03 136.33,73.19 143,74.1 C149.67,75.01 149.77,74.36 155.5,75 C161.23,75.64 158.83,75.59 164.5,76.5 C170.17,77.41 170.15,77.47 176.75,78.4 C183.35,79.33 183.72,78.91 189.25,80 C194.78,81.09 192.5,80.61 197.5,82.5 C202.5,84.39 202.53,84.54 208,87.1 C213.47,89.66 213.33,89.53 218,92.1 C222.67,94.67 222.17,94.75 225.5,96.75 C228.83,98.75 227.17,97.83 230.5,99.6 C233.83,101.37 234,101.72 238,103.4 C242,105.08 241.5,104.67 245.5,105.9 C249.5,107.13 248.23,107.17 253,108 C257.77,108.83 258.73,108.07 263.4,109 C268.07,109.93 266.61,110.17 270.5,111.5 C274.39,112.83 273.33,112.33 278,114 C282.67,115.67 283.33,115.99 288,117.75 C292.67,119.51 290.03,118.93 295.5,120.6 C300.97,122.27 301.7,122.49 308.5,124 C315.3,125.51 314.33,125.16 321,126.25 C327.67,127.34 326.83,126.94 333.5,128.1 C340.17,129.26 339.33,128.6 346,130.6 C352.67,132.6 351.83,132.76 358.5,135.6 C365.17,138.44 364.33,137.92 371,141.25 C377.67,144.58 377.26,144.43 383.5,148.1 C389.74,151.77 389.67,151.16 394.4,155 C399.13,158.84 397.76,158.5 401.25,162.5 C404.74,166.5 404.17,166.16 407.5,170 C410.83,173.84 410.42,173.63 413.75,176.9 C417.08,180.17 417,180.09 420,182.25 C423,184.41 421.67,183.87 425,185 C428.33,186.13 427.17,185.9 432.5,186.5 C437.83,187.1 438.33,187.14 445,187.25 C451.67,187.36 450.83,187.17 457.5,186.9 C464.17,186.63 463.33,186.42 470,186.25 C476.67,186.08 475.83,186.08 482.5,186.25 C489.17,186.42 490,186.23 495,186.9 C500,187.57 497.92,187.76 501.25,188.75 C504.58,189.74 503.83,190.53 507.5,190.6 C511.17,190.67 510.33,189.83 515,189 C519.67,188.17 520.33,188.41 525,187.5 C529.67,186.59 528.5,187.27 532.5,185.6 C536.5,183.93 536,184.24 540,181.25 C544,178.26 544.17,177.4 547.5,174.4 C550.83,171.4 549.83,172.05 552.5,170 C555.17,167.95 553.5,168.03 557.5,166.7 C561.5,165.37 561.9,165.03 567.5,165 C573.1,164.97 572.39,166.6 578.5,166.6 C584.61,166.6 584.67,166.09 590.4,165 C596.13,163.91 594.44,164.34 600,162.5 C605.56,160.66 604.98,160.26 611.25,158.1 C617.52,155.94 616.83,156.56 623.5,154.4 C630.17,152.24 629.45,152.57 636.25,150 C643.05,147.43 642.67,147.95 649,144.75 C655.33,141.55 653.57,141.67 660,138 C666.43,134.33 667.77,134.47 673.1,131 C678.43,127.53 675.89,128.6 680,125 C684.11,121.4 683.83,120.67 688.5,117.5 C693.17,114.33 693.1,115.61 697.5,113.1 C701.9,110.59 701,110.59 705,108.1 C709,105.61 708.1,105.91 712.5,103.75 C716.9,101.59 716.83,101.51 721.5,100 C726.17,98.49 725.07,99.27 730,98.1 C734.93,96.93 735,97.25 740,95.6 C745,93.95 744.91,93.23 748.75,91.9 C752.59,90.57 750.07,91.61 754.4,90.6 C758.73,89.59 760.17,89.59 765,88.1 C769.83,86.61 767.83,86.56 772.5,85 C777.17,83.44 776.5,83.92 782.5,82.25 C788.5,80.58 787.67,80.75 795,78.75 C802.33,76.75 803.44,75.91 810,74.75 C816.56,73.59 814.6,74.4 819.6,74.4 C824.6,74.4 823.98,73.86 828.75,74.75 C833.52,75.64 831.17,75.52 837.5,77.75 C843.83,79.98 845.17,80.1 852.5,83.1 C859.83,86.1 858.33,85.67 865,89 C871.67,92.33 870.83,91.92 877.5,95.6 C884.17,99.28 886.67,100.88 890,102.8" fill="none" stroke="#1616cc" stroke-width="1.15" stroke-linejoin="round"/>
</g>
<text x="21.7" y="277" font-size="11" fill="#0a0a80" textLength="28.2" lengthAdjust="spacingAndGlyphs">MACD</text>
<path d="M22.5,299.5 V296 M28.5,299.5 V295.9 M33.5,299.5 V296.1 M39.5,299.5 V297 M44.5,299.5 V298.14 M50.5,299 V300.2 M55.5,299 V300.2 M61.5,299.5 V300.35 M66.5,299.5 V300.35 M71.5,299.5 V301.4 M77.5,299.5 V302.36 M82.5,299.5 V302.65 M88.5,299.5 V304.33 M93.5,299.5 V304.41 M99.5,299.5 V304.66 M104.5,299.5 V305.05 M110.5,299.5 V305.34 M115.5,299.5 V305.19 M121.5,299.5 V305.03 M126.5,299.5 V304.46 M132.5,299.5 V304 M137.5,299.5 V303.99 M142.5,299.5 V303.99 M148.5,299.5 V303.2 M153.5,299.5 V301.77 M159.5,299.5 V301.52 M164.5,299.5 V302.49 M170.5,299.5 V301.89 M175.5,299.5 V301.78 M181.5,299.5 V302.75 M186.5,299.5 V301.75 M192.5,299.5 V301.75 M197.5,299.5 V302.81 M203.5,299.5 V303.12 M208.5,299.5 V303.88 M213.5,299.5 V304.85 M219.5,299.5 V305.95 M224.5,299.5 V307.15 M230.5,299.5 V306.6 M235.5,299.5 V305.7 M241.5,299.5 V304.5 M246.5,299.5 V303.5 M252.5,299.5 V303.09 M257.5,299 V300.2 M263.5,299 V300.2 M268.5,299 V300.2 M273.5,299.5 V300.25 M279.5,299.5 V300.5 M284.5,299.5 V300.76 M290.5,299.5 V301.46 M295.5,299.5 V301.74 M301.5,299.5 V300.58 M306.5,299 V300.2 M312.5,299 V300.2 M317.5,299.5 V299.02 M323.5,299.5 V299.03 M328.5,299.5 V298.27 M334.5,299.5 V297.68 M339.5,299.5 V298.32 M344.5,299.5 V298.47 M350.5,299.5 V300.28 M355.5,299.5 V301.7 M361.5,299.5 V302.84 M366.5,299.5 V303.23 M372.5,299.5 V304.38 M377.5,299.5 V304.28 M383.5,299.5 V303.91 M388.5,299.5 V303.63 M394.5,299.5 V304.93 M399.5,299.5 V306.98 M405.5,299.5 V308.47 M410.5,299.5 V308.13 M415.5,299.5 V308.66 M421.5,299.5 V306.76 M426.5,299.5 V303.97 M432.5,299.5 V300.82 M437.5,299.5 V298.14 M443.5,299.5 V296.06 M448.5,299.5 V293.85 M454.5,299.5 V292.13 M459.5,299.5 V291.8 M465.5,299.5 V291.6 M470.5,299.5 V292.39 M476.5,299.5 V292.87 M481.5,299.5 V293.95 M486.5,299.5 V293.63 M492.5,299.5 V294.3 M497.5,299.5 V295.83 M503.5,299.5 V298 M508.5,299.5 V297.37 M514.5,299.5 V295.95 M519.5,299.5 V295.52 M525.5,299.5 V295.78 M530.5,299.5 V294.26 M536.5,299.5 V293.02 M541.5,299.5 V291.36 M546.5,299.5 V288.79 M552.5,299.5 V288.17 M557.5,299.5 V290.67 M563.5,299.5 V292.25 M568.5,299.5 V295.98 M574.5,299.5 V298.49 M579.5,299 V300.2 M585.5,299.5 V300 M590.5,299.5 V300.15 M596.5,299 V300.2 M601.5,299 V300.2 M607.5,299.5 V299.07 M612.5,299.5 V297.58 M617.5,299.5 V297.02 M623.5,299.5 V297.26 M628.5,299.5 V298.22 M634.5,299.5 V297.98 M639.5,299.5 V298.24 M645.5,299.5 V297.22 M650.5,299.5 V297.41 M656.5,299.5 V296.81 M661.5,299.5 V296.29 M667.5,299.5 V296.27 M672.5,299.5 V295.43 M678.5,299.5 V294.9 M683.5,299.5 V293.47 M688.5,299.5 V292.65 M694.5,299.5 V295.75 M699.5,299.5 V297 M705.5,299.5 V296.93 M710.5,299.5 V297.62 M716.5,299.5 V298.28 M721.5,299.5 V299.95 M727.5,299.5 V301.41 M732.5,299.5 V301.83 M738.5,299.5 V303.5 M743.5,299.5 V302 M749.5,299.5 V302.11 M754.5,299.5 V302.96 M759.5,299.5 V304.15 M765.5,299.5 V303.44 M770.5,299.5 V303.69 M776.5,299.5 V302.75 M781.5,299.5 V302.71 M787.5,299.5 V303.45 M792.5,299.5 V302.5 M798.5,299.5 V302.5 M803.5,299.5 V301.6 M809.5,299.5 V302.79 M814.5,299.5 V302.98 M819.5,299.5 V304.06 M825.5,299.5 V305.28 M830.5,299.5 V305.88 M836.5,299.5 V307.38 M841.5,299.5 V307.61 M847.5,299.5 V308 M852.5,299.5 V308.59 M858.5,299.5 V308.66 M863.5,299.5 V308.42 M869.5,299.5 V308.85 M874.5,299.5 V308.7 M880.5,299.5 V308.85 M885.5,299.5 V309.32 M890.5,299.5 V308.85" stroke="#b42228" stroke-width="2" fill="none"/>
<polyline points="19.5,288.25 25.5,286.4 33.6,285.1 40.5,285.1 45.5,286.4 55.5,286 66.75,288.25 74.25,289.75 83,291.4 90.5,294.75 99.25,296.4 108,298.5 115.5,300.1 124.25,301.4 130.5,303.25 140.5,303.9 150.5,304.25 158,303 164.25,304.75 178,304.5 180.5,305.5 194.25,305.5 199.25,307.25 208,309.5 218,313.25 225.5,316.4 230.5,317.6 245.5,317.6 254.25,317 258,314.5 270.5,314.25 283,314.25 289.25,315.1 296,315.5 303.5,313.9 314.75,313.5 328.5,311.4 337.25,310.5 346,310.75 353.5,313 362.25,315.1 371,317 381,318.5 389.75,319.75 396,322.6 402.25,326.4 408.5,330.1 414.75,333.25 421,334.25 426,332.25 433.5,328.25 440.25,324.5 446.5,321.75 452.75,317 459,313.9 466.5,311.4 474,309.25 484,307.25 491.5,306 499,307 506.5,308.5 514,305.1 521.5,303.25 526.5,302.6 534,298.9 540.25,295.1 546.5,288.9 552.75,285.1 559,284.25 564,284.5 570.25,287.6 577,291 590.75,291.4 602,290.75 609.5,288.5 617,286 627,286.4 637,286 647,284.25 657,282 667,280.5 674.5,277.6 682,274.5 688.9,270.75 694.5,273 704.5,273 717.5,272.25 722.5,273.9 730,276 738.75,278.5 742.5,277.6 748.75,277.6 757.5,281.4 765,281.4 770,282.6 777.5,281.4 782.5,282.6 790,283.5 805,283.5 810,284.75 820,286.7 830,291 840,295.75 852.5,301.4 865,305.75 877.5,311 890,315.75" fill="none" stroke="#08086e" stroke-width="1.15" stroke-linejoin="round"/>
<g fill="#de2323">
<circle cx="22.5" cy="290.75" r="1.9"/>
<circle cx="28.5" cy="289.5" r="1.9"/>
<circle cx="33.5" cy="288.5" r="1.9"/>
<circle cx="39.5" cy="287.6" r="1.9"/>
<circle cx="44.5" cy="287.6" r="1.9"/>
<circle cx="50.5" cy="286.4" r="1.9"/>
<circle cx="55.5" cy="286.4" r="1.9"/>
<circle cx="61.5" cy="286.4" r="1.9"/>
<circle cx="66.5" cy="287.4" r="1.9"/>
<circle cx="71.5" cy="287.4" r="1.9"/>
<circle cx="77.5" cy="287.6" r="1.9"/>
<circle cx="82.5" cy="288.25" r="1.9"/>
<circle cx="88.5" cy="289.25" r="1.9"/>
<circle cx="93.5" cy="290.5" r="1.9"/>
<circle cx="99.5" cy="291.4" r="1.9"/>
<circle cx="104.5" cy="292.25" r="1.9"/>
<circle cx="110.5" cy="293.25" r="1.9"/>
<circle cx="115.5" cy="294.5" r="1.9"/>
<circle cx="121.5" cy="295.5" r="1.9"/>
<circle cx="126.5" cy="297.25" r="1.9"/>
<circle cx="132.5" cy="298.9" r="1.9"/>
<circle cx="137.5" cy="299.25" r="1.9"/>
<circle cx="142.5" cy="299.5" r="1.9"/>
<circle cx="148.5" cy="300.5" r="1.9"/>
<circle cx="153.5" cy="301.4" r="1.9"/>
<circle cx="159.5" cy="301.4" r="1.9"/>
<circle cx="164.5" cy="301.75" r="1.9"/>
<circle cx="170.5" cy="302.25" r="1.9"/>
<circle cx="175.5" cy="302.25" r="1.9"/>
<circle cx="181.5" cy="302.25" r="1.9"/>
<circle cx="186.5" cy="303.25" r="1.9"/>
<circle cx="192.5" cy="303.25" r="1.9"/>
<circle cx="197.5" cy="303.5" r="1.9"/>
<circle cx="203.5" cy="304.75" r="1.9"/>
<circle cx="208.5" cy="305.5" r="1.9"/>
<circle cx="213.5" cy="306.4" r="1.9"/>
<circle cx="219.5" cy="307.6" r="1.9"/>
<circle cx="224.5" cy="308.5" r="1.9"/>
<circle cx="230.5" cy="310.5" r="1.9"/>
<circle cx="235.5" cy="311.4" r="1.9"/>
<circle cx="241.5" cy="312.6" r="1.9"/>
<circle cx="246.5" cy="313.5" r="1.9"/>
<circle cx="252.5" cy="313.5" r="1.9"/>
<circle cx="257.5" cy="314.5" r="1.9"/>
<circle cx="263.5" cy="314.75" r="1.9"/>
<circle cx="268.5" cy="314.5" r="1.9"/>
<circle cx="273.5" cy="313.5" r="1.9"/>
<circle cx="279.5" cy="313.25" r="1.9"/>
<circle cx="284.5" cy="313.25" r="1.9"/>
<circle cx="290.5" cy="313.25" r="1.9"/>
<circle cx="295.5" cy="313.25" r="1.9"/>
<circle cx="301.5" cy="313.25" r="1.9"/>
<circle cx="306.5" cy="313.5" r="1.9"/>
<circle cx="312.5" cy="313.5" r="1.9"/>
<circle cx="317.5" cy="313.5" r="1.9"/>
<circle cx="323.5" cy="312.6" r="1.9"/>
<circle cx="328.5" cy="312.6" r="1.9"/>
<circle cx="334.5" cy="312.6" r="1.9"/>
<circle cx="339.5" cy="311.75" r="1.9"/>
<circle cx="344.5" cy="311.75" r="1.9"/>
<circle cx="350.5" cy="311.4" r="1.9"/>
<circle cx="355.5" cy="311.4" r="1.9"/>
<circle cx="361.5" cy="311.6" r="1.9"/>
<circle cx="366.5" cy="312.4" r="1.9"/>
<circle cx="372.5" cy="312.4" r="1.9"/>
<circle cx="377.5" cy="313.25" r="1.9"/>
<circle cx="383.5" cy="314.5" r="1.9"/>
<circle cx="388.5" cy="315.5" r="1.9"/>
<circle cx="394.5" cy="316.6" r="1.9"/>
<circle cx="399.5" cy="317.4" r="1.9"/>
<circle cx="405.5" cy="319.5" r="1.9"/>
<circle cx="410.5" cy="322.6" r="1.9"/>
<circle cx="415.5" cy="324.25" r="1.9"/>
<circle cx="421.5" cy="326.75" r="1.9"/>
<circle cx="426.5" cy="327.25" r="1.9"/>
<circle cx="432.5" cy="327.25" r="1.9"/>
<circle cx="437.5" cy="327.25" r="1.9"/>
<circle cx="443.5" cy="326.4" r="1.9"/>
<circle cx="448.5" cy="325.5" r="1.9"/>
<circle cx="454.5" cy="323.25" r="1.9"/>
<circle cx="459.5" cy="321.4" r="1.9"/>
<circle cx="465.5" cy="319.5" r="1.9"/>
<circle cx="470.5" cy="317.25" r="1.9"/>
<circle cx="476.5" cy="315.5" r="1.9"/>
<circle cx="481.5" cy="313.25" r="1.9"/>
<circle cx="486.5" cy="312.6" r="1.9"/>
<circle cx="492.5" cy="311.4" r="1.9"/>
<circle cx="497.5" cy="310.5" r="1.9"/>
<circle cx="503.5" cy="309.5" r="1.9"/>
<circle cx="508.5" cy="309.5" r="1.9"/>
<circle cx="514.5" cy="308.5" r="1.9"/>
<circle cx="519.5" cy="307.6" r="1.9"/>
<circle cx="525.5" cy="306.4" r="1.9"/>
<circle cx="530.5" cy="305.5" r="1.9"/>
<circle cx="536.5" cy="303.5" r="1.9"/>
<circle cx="541.5" cy="301.4" r="1.9"/>
<circle cx="546.5" cy="299.25" r="1.9"/>
<circle cx="552.5" cy="296.4" r="1.9"/>
<circle cx="557.5" cy="293.25" r="1.9"/>
<circle cx="563.5" cy="291.75" r="1.9"/>
<circle cx="568.5" cy="290.5" r="1.9"/>
<circle cx="574.5" cy="290.75" r="1.9"/>
<circle cx="579.5" cy="290.75" r="1.9"/>
<circle cx="585.5" cy="290.75" r="1.9"/>
<circle cx="590.5" cy="290.75" r="1.9"/>
<circle cx="596.5" cy="290.75" r="1.9"/>
<circle cx="601.5" cy="290.5" r="1.9"/>
<circle cx="607.5" cy="289.5" r="1.9"/>
<circle cx="612.5" cy="289.25" r="1.9"/>
<circle cx="617.5" cy="288.5" r="1.9"/>
<circle cx="623.5" cy="288.5" r="1.9"/>
<circle cx="628.5" cy="287.6" r="1.9"/>
<circle cx="634.5" cy="287.6" r="1.9"/>
<circle cx="639.5" cy="286.75" r="1.9"/>
<circle cx="645.5" cy="286.75" r="1.9"/>
<circle cx="650.5" cy="285.5" r="1.9"/>
<circle cx="656.5" cy="284.75" r="1.9"/>
<circle cx="661.5" cy="284.5" r="1.9"/>
<circle cx="667.5" cy="283.5" r="1.9"/>
<circle cx="672.5" cy="282.25" r="1.9"/>
<circle cx="678.5" cy="280.75" r="1.9"/>
<circle cx="683.5" cy="279.5" r="1.9"/>
<circle cx="688.5" cy="277.6" r="1.9"/>
<circle cx="694.5" cy="276.75" r="1.9"/>
<circle cx="699.5" cy="275.5" r="1.9"/>
<circle cx="705.5" cy="275.5" r="1.9"/>
<circle cx="710.5" cy="274.5" r="1.9"/>
<circle cx="716.5" cy="273.5" r="1.9"/>
<circle cx="721.5" cy="273.25" r="1.9"/>
<circle cx="727.5" cy="273.5" r="1.9"/>
<circle cx="732.5" cy="274.5" r="1.9"/>
<circle cx="738.5" cy="274.5" r="1.9"/>
<circle cx="743.5" cy="275.1" r="1.9"/>
<circle cx="749.5" cy="275.1" r="1.9"/>
<circle cx="754.5" cy="276.75" r="1.9"/>
<circle cx="759.5" cy="276.75" r="1.9"/>
<circle cx="765.5" cy="277.6" r="1.9"/>
<circle cx="770.5" cy="278.25" r="1.9"/>
<circle cx="776.5" cy="278.25" r="1.9"/>
<circle cx="781.5" cy="279.25" r="1.9"/>
<circle cx="787.5" cy="279.25" r="1.9"/>
<circle cx="792.5" cy="280.5" r="1.9"/>
<circle cx="798.5" cy="280.5" r="1.9"/>
<circle cx="803.5" cy="281.4" r="1.9"/>
<circle cx="809.5" cy="281.4" r="1.9"/>
<circle cx="814.5" cy="282.25" r="1.9"/>
<circle cx="819.5" cy="282.4" r="1.9"/>
<circle cx="825.5" cy="283.5" r="1.9"/>
<circle cx="830.5" cy="285.1" r="1.9"/>
<circle cx="836.5" cy="286.4" r="1.9"/>
<circle cx="841.5" cy="288.5" r="1.9"/>
<circle cx="847.5" cy="290.75" r="1.9"/>
<circle cx="852.5" cy="292.4" r="1.9"/>
<circle cx="858.5" cy="294.5" r="1.9"/>
<circle cx="863.5" cy="296.4" r="1.9"/>
<circle cx="869.5" cy="298.5" r="1.9"/>
<circle cx="874.5" cy="300.75" r="1.9"/>
<circle cx="880.5" cy="302.6" r="1.9"/>
<circle cx="885.5" cy="304.5" r="1.9"/>
<circle cx="890.5" cy="306.4" r="1.9"/>
</g>
<rect x="20" y="360" width="870" height="1.5" fill="#1818c4"/>
<rect x="20" y="388.1" width="870" height="1.5" fill="#1818c4"/>
<polyline points="37.4,351.9 41.1,355.6 44.25,359.4 47.4,359 50.25,356.9 53,360.6 53.1,360.7" fill="none" stroke="#d020d0" stroke-width="1.2" stroke-linejoin="round"/>
<polyline points="53.1,360.7 56.75,364.4 61.75,368.75 65.5,367.25 72.4,367.25 78,370.25 83,372.75 88.6,382.5 94.25,379.75 99.5,376.9 105.5,379 110.5,382.25 115.5,379.4 121.75,384.4 126.5,385.6 131.75,383.75 138,379.4 142.4,381.25 148,378.5 153.6,379.4 159.25,378.5 163,380 170.5,383.1 175.5,382.25 181.1,384.4 186.75,379.4 192.4,383.75 197.5,386.5 200.87,388.8" fill="none" stroke="#e88628" stroke-width="1.2" stroke-linejoin="round"/>
<polyline points="200.87,388.8 201.75,389.4 206.75,391 214.25,391 219.25,394 224.9,397.25 230.5,396.5 236,396.5 242,393 250,390.5 260,389 262,388.8" fill="none" stroke="#22d022" stroke-width="1.2" stroke-linejoin="round"/>
<polyline points="262,388.8 270,388 280,387.3 294.25,386.9 303.5,386.5 312.25,383.1 317.25,385.25 322.9,382.5 329.1,382.5 333.5,384 338.5,385.25 344.1,387.75 345.69,388.8" fill="none" stroke="#e88628" stroke-width="1.2" stroke-linejoin="round"/>
<polyline points="345.69,388.8 346.6,389.4 351,391.25 356,393.5 361.25,390 366.6,392.5 372.25,392.5 378.5,395.6 383.5,393.5 388.5,393.5 394.75,397.75 399.75,400.25 404.75,401.5 414.75,401.5 421,398.5 424.1,393.1 425.83,388.8" fill="none" stroke="#22d022" stroke-width="1.2" stroke-linejoin="round"/>
<polyline points="425.83,388.8 426.6,386.9 430.4,381.9 434.75,379 437.75,378.5 444,381 449,379 454.6,371.25 459.6,375.25 465,377.5 470.25,373.5 475.9,377.25 480.9,374 486.5,376.5 492.5,376.5 497.75,379.4 503.4,381 509,377.75 514.6,371.25 520.25,375.6 525.9,373.1 531.5,370 536.5,369 542.1,363.75 546.5,362.25 549.6,361 553.4,361.25 557.1,369 563.4,369 569,373.5 575.1,376.9 579.5,374.75 585.75,373.1 590.75,370.25 598.25,370.25 600,369.4 608.25,369.4 612.6,366.25 618.9,366.25 624.5,369 628.9,369.75 634.5,366.9 640.1,366.9 645.1,364.4 650.1,366.5 656.4,363.1 660.75,362.25 665.1,362.25 667.6,363.5 672,361.25 672.76,360.7" fill="none" stroke="#e88628" stroke-width="1.2" stroke-linejoin="round"/>
<polyline points="672.76,360.7 675.1,359 680.75,356.9 685.75,356.9 688.5,355.6 691.12,360.7" fill="none" stroke="#d020d0" stroke-width="1.2" stroke-linejoin="round"/>
<polyline points="691.12,360.7 691.4,361.25 695.1,365.6 700.75,365.6 704.5,364 708.84,360.7" fill="none" stroke="#e88628" stroke-width="1.2" stroke-linejoin="round"/>
<polyline points="708.84,360.7 709.5,360.2 710.41,360.7" fill="none" stroke="#d020d0" stroke-width="1.2" stroke-linejoin="round"/>
<polyline points="710.41,360.7 713.25,362.25 716.25,364.4 721.9,365.6 728.1,369.75 733.1,368.5 738.75,368.5 743.75,364.4 748.75,364.4 754.4,369 759.4,370.6 765,368.5 770.6,368.5 776.9,364.4 781.9,366.5 787.5,369 792.5,366.5 798.75,367.25 803.75,366.25 810.6,366.25 815,369 820,372.75 825.6,372.75 830.6,377.25 836.25,380 841.25,381 846.25,380.25 850.6,382.25 858.1,387.5 863.75,382.5 869.4,382.5 875,386.5 878.1,387.25 883,387.25" fill="none" stroke="#e88628" stroke-width="1.2" stroke-linejoin="round"/>
<path d="M878.1,387.25 H883" stroke="#22d022" stroke-width="1.3"/>
<path d="M18.5,348.5 H20" stroke="#d020d0" stroke-width="1.2"/>
<text x="21.7" y="354.8" font-size="11" fill="#e88a30" textLength="14.5" lengthAdjust="spacingAndGlyphs">RSI</text>
<rect x="19.5" y="39.5" width="884" height="220" fill="none" stroke="#a9bccf" stroke-width="1"/>
<rect x="19.5" y="265.5" width="884" height="72" fill="none" stroke="#a9bccf" stroke-width="1"/>
<rect x="19.5" y="343.5" width="884" height="60" fill="none" stroke="#a9bccf" stroke-width="1"/>
<rect x="19" y="39" width="31" height="22" fill="#f1f0f0"/>
<rect x="19" y="39" width="31" height="5" fill="#d2d2d2"/>
<rect x="23.5" y="47.5" width="9" height="9" rx="1.5" fill="url(#rb)" stroke="#b01828" stroke-width="1"/>
<rect x="36.5" y="47.5" width="9" height="9" rx="1.5" fill="url(#bb)" stroke="#1068a8" stroke-width="1"/>
<g stroke="#c9d6e2" stroke-width="1">
<path d="M33.5,404 V407.5"/>
<path d="M66.5,404 V407.5"/>
<path d="M99.5,404 V407.5"/>
<path d="M132.5,404 V407.5"/>
<path d="M164.5,404 V407.5"/>
<path d="M197.5,404 V407.5"/>
<path d="M230.5,404 V407.5"/>
<path d="M263.5,404 V407.5"/>
<path d="M295.5,404 V407.5"/>
<path d="M328.5,404 V407.5"/>
<path d="M361.5,404 V407.5"/>
<path d="M394.5,404 V407.5"/>
<path d="M426.5,404 V407.5"/>
<path d="M459.5,404 V407.5"/>
<path d="M492.5,404 V407.5"/>
<path d="M525.5,404 V407.5"/>
<path d="M557.5,404 V407.5"/>
<path d="M590.5,404 V407.5"/>
<path d="M623.5,404 V407.5"/>
<path d="M656.5,404 V407.5"/>
<path d="M688.5,404 V407.5"/>
<path d="M721.5,404 V407.5"/>
<path d="M754.5,404 V407.5"/>
<path d="M787.5,404 V407.5"/>
<path d="M819.5,404 V407.5"/>
<path d="M852.5,404 V407.5"/>
<path d="M885.5,404 V407.5"/>
<path d="M904,50.5 H907.5"/>
<path d="M904,87.5 H907.5"/>
<path d="M904,124.5 H907.5"/>
<path d="M904,162.5 H907.5"/>
<path d="M904,199.5 H907.5"/>
<path d="M904,236.5 H907.5"/>
<path d="M904,299.5 H907.5"/><path d="M904,374.5 H907.5"/>
</g>
<g font-size="11" fill="#ffffff" stroke="#ffffff" stroke-width="0.22">
<text x="27.1" y="425.8" textLength="11.2" lengthAdjust="spacingAndGlyphs">21</text>
<text x="60.1" y="425.8" textLength="11.2" lengthAdjust="spacingAndGlyphs">24</text>
<text x="93.1" y="425.8" textLength="11.2" lengthAdjust="spacingAndGlyphs">25</text>
<text x="126.1" y="425.8" textLength="11.2" lengthAdjust="spacingAndGlyphs">26</text>
<text x="158.1" y="425.8" textLength="11.2" lengthAdjust="spacingAndGlyphs">27</text>
<text x="191.1" y="425.8" textLength="11.2" lengthAdjust="spacingAndGlyphs">28</text>
<text x="226.9" y="425.8" textLength="5.6" lengthAdjust="spacingAndGlyphs">2</text>
<text x="259.9" y="425.8" textLength="5.6" lengthAdjust="spacingAndGlyphs">3</text>
<text x="291.9" y="425.8" textLength="5.6" lengthAdjust="spacingAndGlyphs">4</text>
<text x="324.9" y="425.8" textLength="5.6" lengthAdjust="spacingAndGlyphs">5</text>
<text x="357.9" y="425.8" textLength="5.6" lengthAdjust="spacingAndGlyphs">6</text>
<text x="390.9" y="425.8" textLength="5.6" lengthAdjust="spacingAndGlyphs">9</text>
<text x="420.1" y="425.8" textLength="11.2" lengthAdjust="spacingAndGlyphs">10</text>
<text x="453.1" y="425.8" textLength="11.2" lengthAdjust="spacingAndGlyphs">11</text>
<text x="486.1" y="425.8" textLength="11.2" lengthAdjust="spacingAndGlyphs">12</text>
<text x="519.1" y="425.8" textLength="11.2" lengthAdjust="spacingAndGlyphs">13</text>
<text x="551.1" y="425.8" textLength="11.2" lengthAdjust="spacingAndGlyphs">16</text>
<text x="584.1" y="425.8" textLength="11.2" lengthAdjust="spacingAndGlyphs">17</text>
<text x="617.1" y="425.8" textLength="11.2" lengthAdjust="spacingAndGlyphs">18</text>
<text x="650.1" y="425.8" textLength="11.2" lengthAdjust="spacingAndGlyphs">19</text>
<text x="682.1" y="425.8" textLength="11.2" lengthAdjust="spacingAndGlyphs">20</text>
<text x="715.1" y="425.8" textLength="11.2" lengthAdjust="spacingAndGlyphs">23</text>
<text x="748.1" y="425.8" textLength="11.2" lengthAdjust="spacingAndGlyphs">24</text>
<text x="781.1" y="425.8" textLength="11.2" lengthAdjust="spacingAndGlyphs">25</text>
<text x="813.1" y="425.8" textLength="11.2" lengthAdjust="spacingAndGlyphs">26</text>
<text x="846.1" y="425.8" textLength="11.2" lengthAdjust="spacingAndGlyphs">27</text>
<text x="879.1" y="425.8" textLength="11.2" lengthAdjust="spacingAndGlyphs">30</text>
<text x="910.5" y="56.8" textLength="32.8" lengthAdjust="spacingAndGlyphs">112.00</text>
<text x="910.5" y="93.8" textLength="32.8" lengthAdjust="spacingAndGlyphs">110.00</text>
<text x="910.5" y="168.8" textLength="32.8" lengthAdjust="spacingAndGlyphs">106.00</text>
<text x="910.5" y="205.8" textLength="32.8" lengthAdjust="spacingAndGlyphs">104.00</text>
<text x="910.5" y="242.8" textLength="32.8" lengthAdjust="spacingAndGlyphs">102.00</text>
<text x="912.3" y="305.8" textLength="12.2" lengthAdjust="spacingAndGlyphs">+0</text>
<text x="911.9" y="380.3" textLength="10.6" lengthAdjust="spacingAndGlyphs">50</text>
</g>
<rect x="903" y="123" width="48" height="21" fill="#ffffff"/>
<text x="911.9" y="136.6" font-size="10.6" fill="#3c4250" textLength="32.5" lengthAdjust="spacingAndGlyphs">107.52</text>
<rect x="20" y="380.5" width="62" height="19" rx="2" fill="#5d7188" stroke="#c3dbe2" stroke-width="1"/>
<rect x="19.6" y="380" width="1.2" height="27.5" fill="#d6ecee"/>
<text x="28" y="393.6" font-size="10.8" fill="#ffffff" textLength="45" lengthAdjust="spacingAndGlyphs">Фев 2020</text>
<rect x="230.5" y="380.5" width="63.5" height="19" rx="2" fill="#5d7188" stroke="#c3dbe2" stroke-width="1"/>
<rect x="229.9" y="380" width="1.2" height="27.5" fill="#d6ecee"/>
<text x="238.6" y="393.6" font-size="10.8" fill="#ffffff" textLength="48.2" lengthAdjust="spacingAndGlyphs">Мар 2020</text>
</svg></body></html>
